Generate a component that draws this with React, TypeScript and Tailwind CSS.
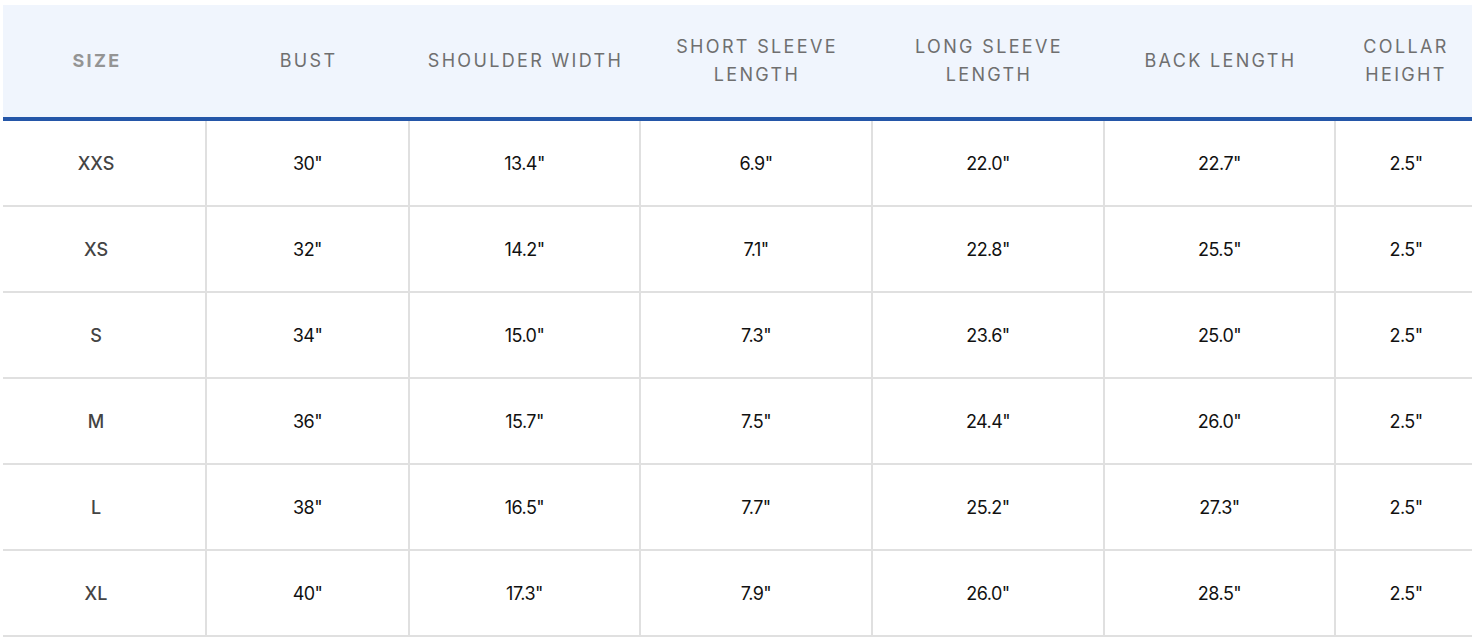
import React from 'react'

const headers = [
  'SIZE',
  'BUST',
  'SHOULDER WIDTH',
  'SHORT SLEEVE LENGTH',
  'LONG SLEEVE LENGTH',
  'BACK LENGTH',
  'COLLAR HEIGHT',
]

// header labels that wrap onto two lines
const headerLines: Record<string, string[]> = {
  'SHORT SLEEVE LENGTH': ['SHORT SLEEVE', 'LENGTH'],
  'LONG SLEEVE LENGTH': ['LONG SLEEVE', 'LENGTH'],
  'COLLAR HEIGHT': ['COLLAR', 'HEIGHT'],
}

const rows = [
  ['XXS', '30"', '13.4"', '6.9"', '22.0"', '22.7"', '2.5"'],
  ['XS', '32"', '14.2"', '7.1"', '22.8"', '25.5"', '2.5"'],
  ['S', '34"', '15.0"', '7.3"', '23.6"', '25.0"', '2.5"'],
  ['M', '36"', '15.7"', '7.5"', '24.4"', '26.0"', '2.5"'],
  ['L', '38"', '16.5"', '7.7"', '25.2"', '27.3"', '2.5"'],
  ['XL', '40"', '17.3"', '7.9"', '26.0"', '28.5"', '2.5"'],
]

const cols = 'grid grid-cols-[204px_203px_231px_232px_232px_231px_140px]'

export default function App() {
  return (
    <div
      className="w-[1472px] h-[644px] overflow-hidden bg-white pl-[3px] pt-[5px]"
      style={{ fontFamily: 'Inter, "Noto Sans", sans-serif' }}
    >
      <div className="w-[1473px]">
        {/* HEADER */}
        <div className={`${cols} h-[116px] bg-[#f0f5fd] border-b-4 border-[#2456a8]`}>
          {headers.map((h, i) => {
            const lines = headerLines[h] ?? [h]
            return (
              <div
                key={h}
                className={`flex flex-col items-center justify-center text-center text-[18px] leading-[28px] tracking-[0.13em] ${
                  i === 0 ? 'pr-4 font-bold text-[#949494]' : 'text-[#6f6f6f]'
                }`}
              >
                {lines.map((l) => (
                  <span key={l}>{l}</span>
                ))}
              </div>
            )
          })}
        </div>

        {/* BODY */}
        {rows.map((row) => (
          <div key={row[0]} className={`${cols} h-[86px]`}>
            {row.map((cell, i) => (
              <div
                key={i}
                className={`flex items-center justify-center border-b-2 border-[#e0e0e0] text-[18px] ${
                  i < row.length - 1 ? 'border-r-2' : ''
                } ${i === 0 ? 'pr-4 font-medium text-[#444]' : 'tracking-[-0.03em] text-[#111]'}`}
              >
                {cell}
              </div>
            ))}
          </div>
        ))}
      </div>
    </div>
  )
}
